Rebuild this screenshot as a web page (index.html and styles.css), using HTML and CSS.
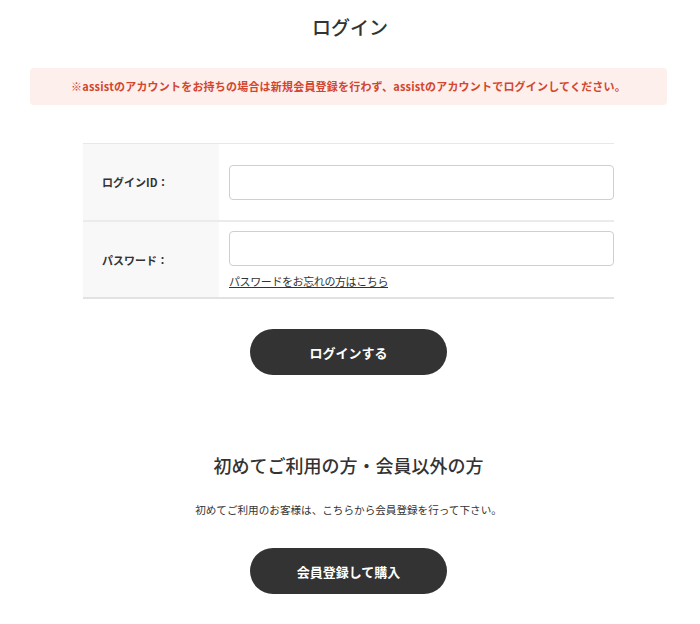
FILE: index.html
```html
<!DOCTYPE html>
<html lang="ja">
<head>
  <meta charset="UTF-8">
  <meta name="viewport" content="width=device-width, initial-scale=1.0">
  <title>ログイン</title>
  <link rel="stylesheet" href="styles.css">
</head>
<body>

  <div class="page">
    <h1 class="page-title">ログイン</h1>

    <div class="notice">
      ※assistのアカウントをお持ちの場合は新規会員登録を行わず、assistのアカウントでログインしてください。
    </div>

    <!-- Login form -->
    <form class="login-form">
      <table class="login-table">
        <tr class="row-id">
          <th>ログインID：</th>
          <td><input type="text" class="text-input"></td>
        </tr>
        <tr class="row-pass">
          <th>パスワード：</th>
          <td>
            <input type="password" class="text-input">
            <a href="#" class="forgot-link">パスワードをお忘れの方はこちら</a>
          </td>
        </tr>
      </table>

      <div class="btn-wrap">
        <button type="button" class="btn-dark">ログインする</button>
      </div>
    </form>

    <!-- New customer -->
    <section class="guest">
      <h2 class="guest-title">初めてご利用の方・会員以外の方</h2>
      <p class="guest-text">初めてご利用のお客様は、こちらから会員登録を行って下さい。</p>
      <div class="btn-wrap">
        <button type="button" class="btn-dark">会員登録して購入</button>
      </div>
    </section>
  </div>

</body>
</html>
```

FILE: styles.css
```css
/* base */
body {
  margin: 0;
  background: #fff;
  color: #333;
  font-family: "Noto Sans CJK JP", "Noto Sans", sans-serif;
}

.page {
  width: 700px;
  padding-top: 13px;
}

.page-title {
  margin: 0;
  text-align: center;
  font-size: 19px;
  font-weight: 500;
  line-height: 28px;
}

/* notice box */
.notice {
  margin: 27px 33px 0 30px;
  height: 37px;
  background-color: #fcefec;
  border-radius: 4px;
  color: #d4452d;
  font-size: 11px;
  font-weight: 700;
  line-height: 37px;
  text-align: center;
  letter-spacing: 0.2px;
}

/* login table */
.login-form {
  margin-top: 38px;
}

.login-table {
  width: 531px;
  margin-left: 83px;
  border-collapse: collapse;
  border-top: 1px solid #e8e8e8;
  border-bottom: 2px solid #e2e2e2;
}

.login-table tr + tr {
  border-top: 2px solid #ebebeb;
}

.login-table th {
  width: 117px;
  padding: 0 0 0 19px;
  background-color: #f8f8f8;
  text-align: left;
  font-size: 11px;
  font-weight: 700;
}

.login-table td {
  padding: 0 0 0 10px;
}

.row-id th,
.row-id td {
  height: 76px;
}

.row-pass td {
  padding-top: 9px;
  padding-bottom: 6px;
}

.row-pass th {
  padding-top: 1px;
}

.text-input {
  display: block;
  box-sizing: border-box;
  width: 385px;
  height: 35px;
  border: 1px solid #cfcfcf;
  border-radius: 4px;
  background: #fff;
}

.forgot-link {
  display: inline-block;
  margin-top: 7px;
  color: #333;
  font-size: 11px;
  line-height: 16px;
  letter-spacing: -0.4px;
}

/* buttons */
.btn-wrap {
  display: flex;
  justify-content: center;
}

.login-form .btn-wrap {
  margin-top: 30px;
  padding-right: 3px;
}

.btn-dark {
  width: 197px;
  height: 46px;
  border: none;
  border-radius: 23px;
  background-color: #333;
  color: #fff;
  font-family: inherit;
  font-size: 13px;
  font-weight: 700;
  cursor: pointer;
}

/* guest section */
.guest {
  margin-top: 77px;
  padding-right: 3px;
  text-align: center;
}

.guest-title {
  margin: 0;
  font-size: 18px;
  font-weight: 500;
  line-height: 26px;
}

.guest-text {
  margin: 24px 0 0;
  font-size: 10.6px;
  line-height: 16px;
}

.guest .btn-wrap {
  margin-top: 30px;
}
```
